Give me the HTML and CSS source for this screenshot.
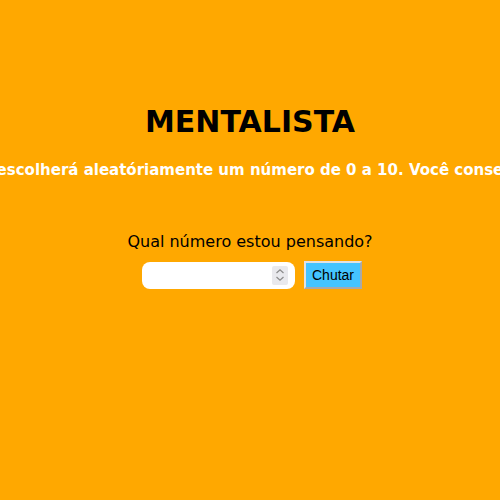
FILE: index.html
```html
<!DOCTYPE html>
<html lang="pt-BR">
<head>
<meta charset="utf-8">
<title>Mentalista</title>
<link rel="stylesheet" href="styles.css">
</head>
<body>
<main class="page">
  <h1 class="title">MENTALISTA</h1>
  <h3 class="subtitle">O computador escolherá aleatóriamente um número de 0 a 10. Você consegue adivinhar?</h3>
  <p class="question">Qual número estou pensando?</p>
  <div class="controls">
    <div class="field">
      <input class="guess" type="number">
      <span class="spin">
        <svg width="10" height="14" viewBox="0 0 10 14" aria-hidden="true">
          <path d="M1.5 5 L5 1.8 L8.5 5" fill="none" stroke="#8a8a8a" stroke-width="1.2"/>
          <path d="M1.5 9 L5 12.2 L8.5 9" fill="none" stroke="#8a8a8a" stroke-width="1.2"/>
        </svg>
      </span>
    </div>
    <button class="kick">Chutar</button>
  </div>
</main>
</body>
</html>
```
FILE: styles.css
```css
html, body {
  margin: 0;
  padding: 0;
  height: 100%;
  background: #ffa800;
}
body {
  overflow: hidden;
}
.page {
  display: flex;
  flex-direction: column;
  align-items: center;
  padding-top: 101px;
  font-family: "DejaVu Sans", sans-serif;
}
.title {
  margin: 0;
  font-size: 30px;
  font-weight: bold;
  color: #000;
  line-height: 42px;
}
.subtitle {
  margin: 16px 0 0;
  white-space: nowrap;
  font-size: 15px;
  font-weight: bold;
  color: #fff;
  line-height: 22px;
}
.question {
  margin: 50px 0 0;
  font-size: 16px;
  font-weight: normal;
  color: #000;
  line-height: 22px;
}
.controls {
  display: flex;
  align-items: center;
  gap: 9px;
  margin-top: 8px;
  margin-left: 4px;
}
.field {
  display: flex;
  align-items: center;
  width: 153px;
  height: 27px;
  box-sizing: border-box;
  background: #fff;
  border-radius: 8px;
  padding: 0 7px 0 4px;
}
.guess {
  flex: 1;
  min-width: 0;
  border: none;
  outline: none;
  background: transparent;
  padding: 0;
  font-size: 13.333px;
  -moz-appearance: textfield;
}
.guess::-webkit-inner-spin-button,
.guess::-webkit-outer-spin-button {
  -webkit-appearance: none;
  margin: 0;
}
.spin {
  display: flex;
  align-items: center;
  justify-content: center;
  width: 16px;
  height: 19px;
  background: #e9e9ed;
  border-radius: 2px;
}
.kick {
  box-sizing: border-box;
  width: 58px;
  height: 28px;
  background: #44c4ff;
  color: #000;
  font-family: "Liberation Sans", Arial, sans-serif;
  font-size: 14px;
  padding: 0;
  border: 2px solid;
  border-color: #e2e2e2 #a9a9a9 #a9a9a9 #e2e2e2;
}
```
